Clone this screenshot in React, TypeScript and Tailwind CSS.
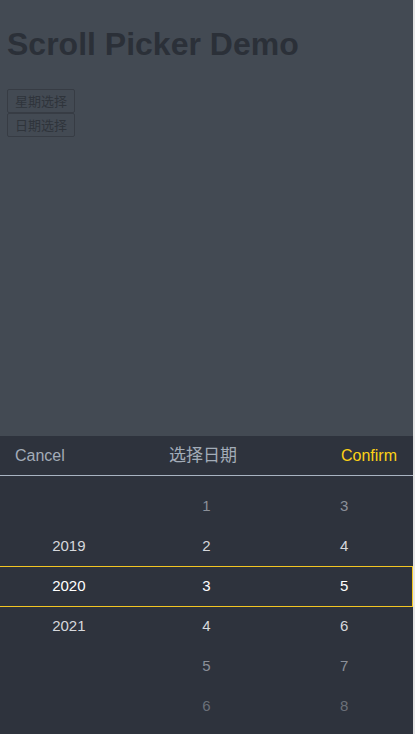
const years = ["", "2019", "2020", "2021", "", ""];
const days = ["1", "2", "3", "4", "5", "6"];
const nums = ["3", "4", "5", "6", "7", "8"];

const tone = [
  "text-[#8b9099]",
  "text-[#d6d8dc]",
  "text-white",
  "text-[#d6d8dc]",
  "text-[#8b9099]",
  "text-[#6b7079]",
];

const App = () => {
  return (
    <div className="flex h-[734px] w-full bg-[#e6e6e6] font-['Liberation_Sans','Noto_Sans_CJK_SC',sans-serif]">
      <div className="relative flex h-full w-[413px] flex-col bg-[#434a53]">
        <div className="pl-[7px] pt-[24px]">
          <h1 className="text-[32px] font-bold leading-[40px] text-[#2b3038]">Scroll Picker Demo</h1>
          <div className="mt-[25px] flex flex-col items-start">
            <button className="h-[24px] rounded-[2px] border border-[#373c44] px-[7px] text-[13px] leading-none text-[#2f343b]">
              星期选择
            </button>
            <button className="h-[24px] rounded-[2px] border border-[#373c44] px-[7px] text-[13px] leading-none text-[#2f343b]">
              日期选择
            </button>
          </div>
        </div>
        <div className="mt-auto h-[298px] bg-[#2e333d]">
          <div className="flex h-[40px] items-center justify-between border-b border-[#a9b4c2] pl-[15px] pr-[16px]">
            <span className="text-[16px] text-[#a3acb8]">Cancel</span>
            <span className="text-[17px] text-[#a3acb8]">选择日期</span>
            <span className="text-[16px] text-[#fcd116]">Confirm</span>
          </div>
          <div className="relative mt-[10px]">
            <div className="absolute left-[-2px] right-0 top-[80px] h-[41px] border border-[#f3c623]" />
            {years.map((y, i) => (
              <div key={i} className={`grid h-[40px] grid-cols-3 items-center text-center text-[15px] ${tone[i]}`}>
                <span>{y}</span>
                <span>{days[i]}</span>
                <span>{nums[i]}</span>
              </div>
            ))}
          </div>
        </div>
      </div>
    </div>
  );
};

export default App;
